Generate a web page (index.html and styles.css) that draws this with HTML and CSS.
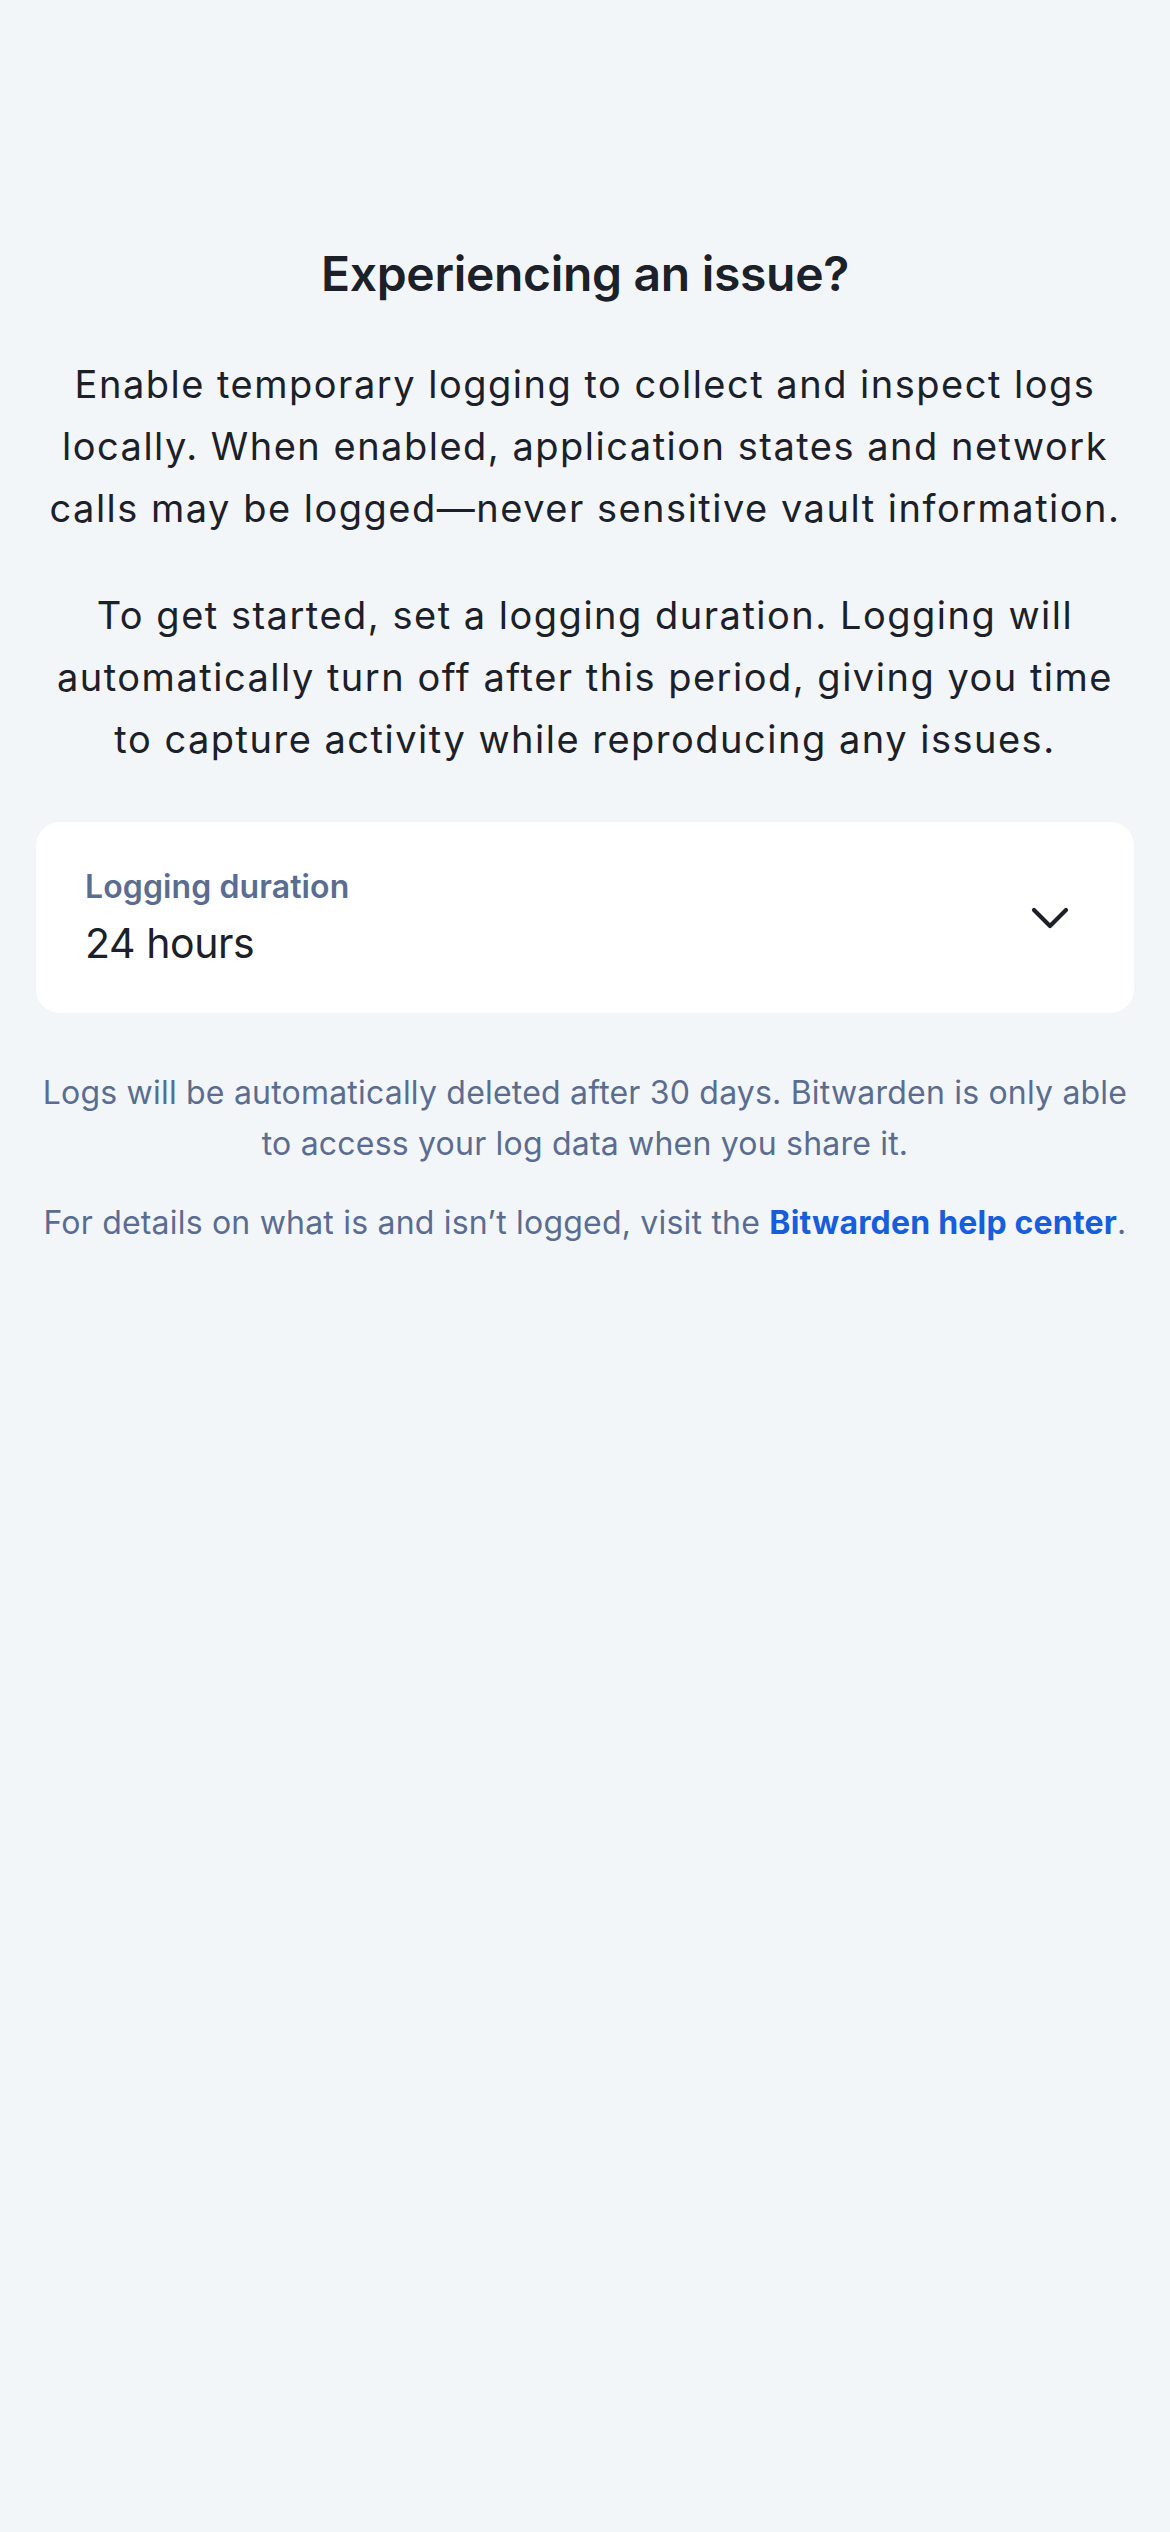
FILE: index.html
```html
<!DOCTYPE html>
<html lang="en">
<head>
<meta charset="utf-8">
<title>Experiencing an issue?</title>
<link rel="stylesheet" href="styles.css">
</head>
<body>
<main class="page">
  <h1 class="title">Experiencing an issue?</h1>
  <p class="lead">Enable temporary logging to collect and inspect logs locally. When enabled, application states and network calls may be logged—never sensitive vault information.</p>
  <p class="lead lead-second">To get started, set a logging duration. Logging will automatically turn off after this period, giving you time to capture activity while reproducing any issues.</p>
  <div class="field">
    <div class="field-text">
      <div class="field-label">Logging duration</div>
      <div class="field-value">24 hours</div>
    </div>
    <svg class="chevron" width="40" height="24" viewBox="0 0 40 24" aria-hidden="true">
      <path d="M4 4 L20 20 L36 4" fill="none" stroke="#1b2029" stroke-width="4.2" stroke-linecap="round" stroke-linejoin="round"/>
    </svg>
  </div>
  <p class="note">Logs will be automatically deleted after 30 days. Bitwarden is only able to access your log data when you share it.</p>
  <p class="note note-second">For details on what is and isn’t logged, visit the <a class="link" href="#">Bitwarden help center</a>.</p>
</main>
</body>
</html>
```
FILE: styles.css
```css
html, body {
  margin: 0;
  padding: 0;
  background: #f3f6f9;
}
body {
  font-family: Inter, "Noto Sans", "Liberation Sans", sans-serif;
  color: #1b2029;
  min-height: 2532px;
}
.page {
  padding: 245px 36px 0;
  display: flex;
  flex-direction: column;
}
.title {
  margin: 0;
  font-size: 48px;
  line-height: 58px;
  font-weight: 600;
  text-align: center;
  letter-spacing: -0.3px;
}
.lead {
  margin: 50px 0 0;
  font-size: 38px;
  line-height: 62px;
  font-weight: 400;
  text-align: center;
  letter-spacing: 1.5px;
}
.lead-second {
  margin-top: 45px;
}
.field {
  margin-top: 52px;
  background: #ffffff;
  border-radius: 24px;
  padding: 45px 64px 44px 49px;
  display: flex;
  align-items: center;
  justify-content: space-between;
}
.field-text {
  display: flex;
  flex-direction: column;
  gap: 10px;
}
.field-label {
  font-size: 32px;
  line-height: 40px;
  font-weight: 600;
  color: #5a6d91;
  letter-spacing: 0.1px;
}
.field-value {
  font-size: 41px;
  line-height: 52px;
  color: #1b2029;
  letter-spacing: -0.4px;
}
.chevron {
  display: block;
}
.note {
  margin: 54px 0 0;
  font-size: 32px;
  line-height: 51px;
  color: #5a6d91;
  text-align: center;
  letter-spacing: 0.2px;
}
.note-second {
  margin-top: 28px;
}
.link {
  color: #175ddc;
  font-weight: 700;
  text-decoration: none;
}
```
